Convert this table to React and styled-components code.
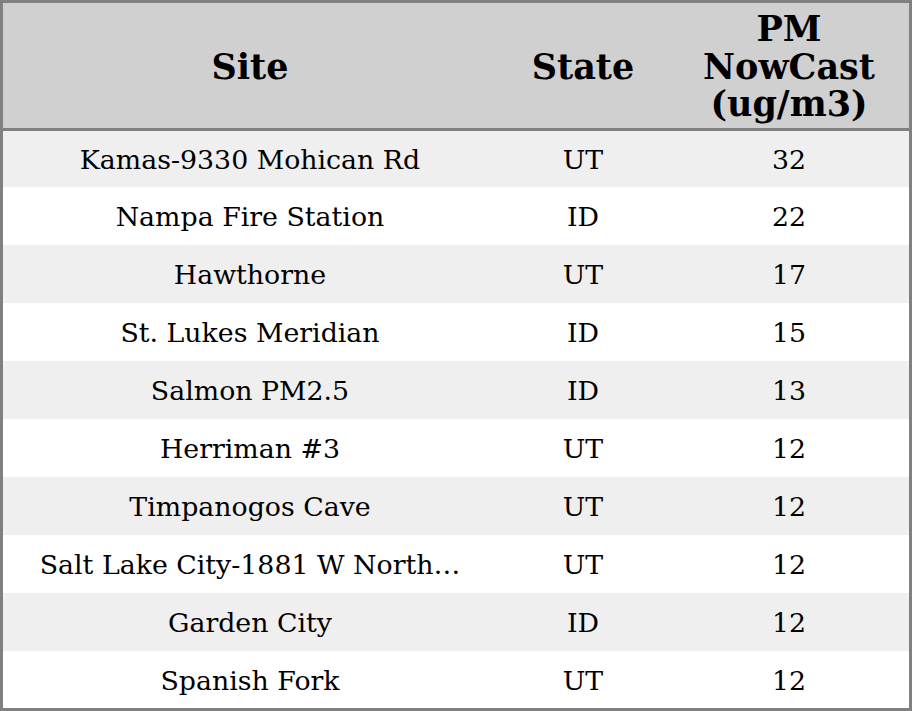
import React from 'react'
import styled, { createGlobalStyle } from 'styled-components'

const GlobalStyle = createGlobalStyle`
  html, body {
    margin: 0;
    padding: 0;
    background: #ffffff;
  }
  body {
    font-family: "DejaVu Serif", serif;
    color: #000000;
  }
`

const Board = styled.div`
  box-sizing: border-box;
  width: 912px;
  height: 711px;
  border: 3px solid #808080;
  display: flex;
  flex-direction: column;
`

const Header = styled.div`
  display: grid;
  grid-template-columns: 494px 172px 1fr;
  height: 125px;
  background: #d0d0d0;
  border-bottom: 3px solid #808080;
  flex: 0 0 auto;
`

const HeadCell = styled.div`
  display: flex;
  align-items: center;
  justify-content: center;
  text-align: center;
  font-weight: bold;
  font-size: 35px;
  line-height: 37.5px;
  padding-top: 2px;
`

const Body = styled.div`
  flex: 1;
  display: flex;
  flex-direction: column;
`

const Row = styled.div`
  flex: 0 0 58px;
  display: grid;
  grid-template-columns: 494px 172px 1fr;
  align-items: center;
  background: ${p => (p.$odd ? '#ffffff' : '#efefef')};

  &:first-child {
    flex-basis: 56px;
  }
  &:last-child {
    flex: 1;
  }
`

const Cell = styled.div`
  text-align: center;
  font-size: 26.8px;
  padding: 1px 30px 0;
  white-space: nowrap;
  overflow: hidden;
  text-overflow: ellipsis;
`

const rows = [
  ['Kamas-9330 Mohican Rd', 'UT', 32],
  ['Nampa Fire Station', 'ID', 22],
  ['Hawthorne', 'UT', 17],
  ['St. Lukes Meridian', 'ID', 15],
  ['Salmon PM2.5', 'ID', 13],
  ['Herriman #3', 'UT', 12],
  ['Timpanogos Cave', 'UT', 12],
  ['Salt Lake City-1881 W North…', 'UT', 12],
  ['Garden City', 'ID', 12],
  ['Spanish Fork', 'UT', 12],
]

export default function App() {
  return (
    <>
      <GlobalStyle />
      <Board>
        <Header>
          <HeadCell>Site</HeadCell>
          <HeadCell>State</HeadCell>
          <HeadCell>PM<br />NowCast<br />(ug/m3)</HeadCell>
        </Header>
        <Body>
          {rows.map((r, i) => (
            <Row key={i} $odd={i % 2 === 1}>
              <Cell>{r[0]}</Cell>
              <Cell>{r[1]}</Cell>
              <Cell>{r[2]}</Cell>
            </Row>
          ))}
        </Body>
      </Board>
    </>
  )
}
